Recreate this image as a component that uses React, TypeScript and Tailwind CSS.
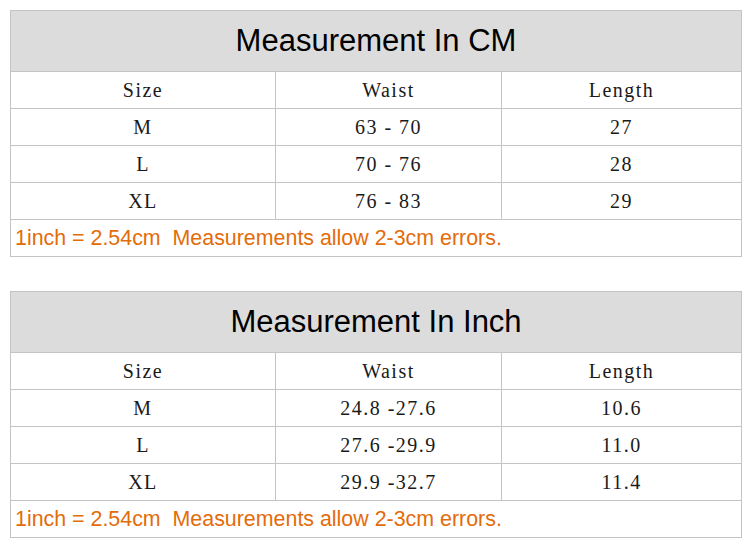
const rowsCm = [
  ["M", "63 - 70", "27"],
  ["L", "70 - 76", "28"],
  ["XL", "76 - 83", "29"],
];

const rowsInch = [
  ["M", "24.8 -27.6", "10.6"],
  ["L", "27.6 -29.9", "11.0"],
  ["XL", "29.9 -32.7", "11.4"],
];

const cell =
  "border border-[#c4c4c4] h-[37px] p-0 text-center align-middle text-[20px] tracking-[1.5px] text-[#1a1a1a] font-['Liberation_Serif','Times_New_Roman',serif] whitespace-pre";

const SizeTable = ({ title, rows }: { title: string; rows: string[][] }) => {
  return (
    <table className="w-[731px] border-collapse table-fixed">
      <colgroup>
        <col className="w-[265px]" />
        <col className="w-[226px]" />
        <col className="w-[240px]" />
      </colgroup>
      <tbody>
        <tr>
          <td
            colSpan={3}
            className="border border-[#c4c4c4] bg-[#dcdcdc] h-[61px] text-center align-middle text-[31px] text-black font-['Liberation_Sans',Arial,sans-serif]"
          >
            {title}
          </td>
        </tr>
        <tr>
          <td className={cell}>Size</td>
          <td className={cell}>Waist</td>
          <td className={cell}>Length</td>
        </tr>
        {rows.map((r) => (
          <tr key={r[0]}>
            <td className={cell}>{r[0]}</td>
            <td className={cell}>{r[1]}</td>
            <td className={cell}>{r[2]}</td>
          </tr>
        ))}
        <tr>
          <td
            colSpan={3}
            className="border border-[#c4c4c4] h-[37px] pl-[4px] align-middle text-[21.4px] text-[#e36c0a] font-['Liberation_Sans',Arial,sans-serif] whitespace-pre"
          >
            {"1inch = 2.54cm  Measurements allow 2-3cm errors."}
          </td>
        </tr>
      </tbody>
    </table>
  );
};

const App = () => {
  return (
    <div className="w-[750px] h-[545px] bg-white pt-[10px] pl-[10px] flex flex-col gap-[34px]">
      <SizeTable title="Measurement In CM" rows={rowsCm} />
      <SizeTable title="Measurement In Inch" rows={rowsInch} />
    </div>
  );
};

export default App;
